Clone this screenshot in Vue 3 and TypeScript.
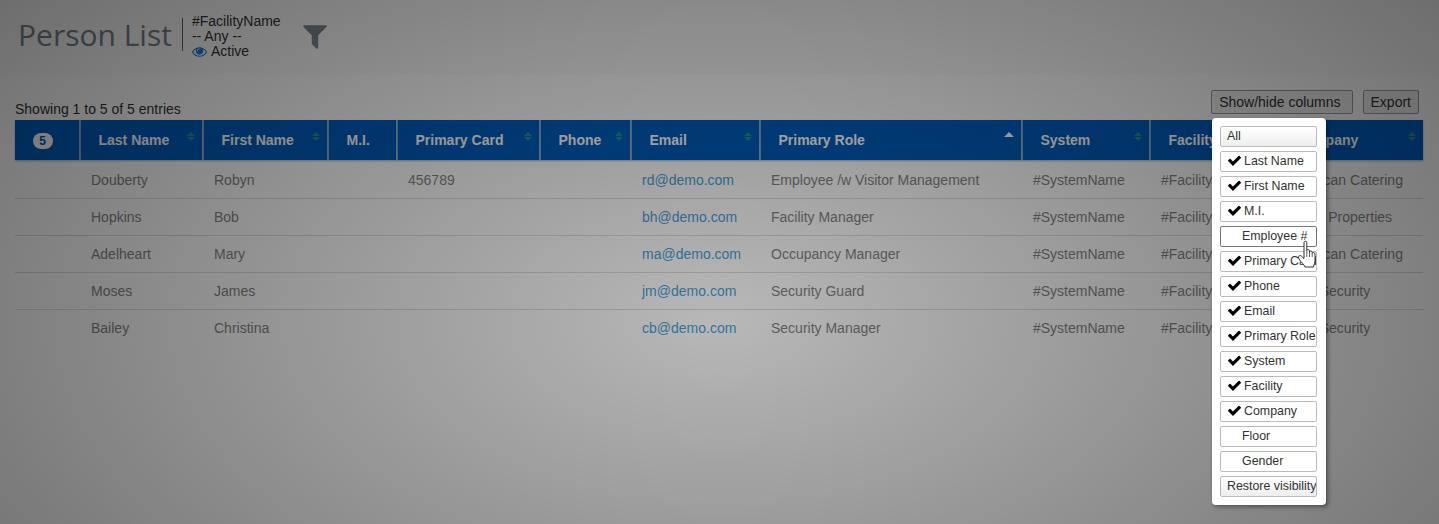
<script setup lang="ts">
interface Col { label: string; width: number; sort: 'both' | 'asc' | 'none' }
const cols: Col[] = [
  { label: '', width: 66, sort: 'none' },
  { label: 'Last Name', width: 123, sort: 'both' },
  { label: 'First Name', width: 125, sort: 'both' },
  { label: 'M.I.', width: 69, sort: 'none' },
  { label: 'Primary Card', width: 143, sort: 'both' },
  { label: 'Phone', width: 91, sort: 'both' },
  { label: 'Email', width: 129, sort: 'both' },
  { label: 'Primary Role', width: 262, sort: 'asc' },
  { label: 'System', width: 128, sort: 'both' },
  { label: 'Facility', width: 126, sort: 'both' },
  { label: 'Company', width: 146, sort: 'both' },
]
const rows = [
  ['Douberty', 'Robyn', '', '456789', '', 'rd@demo.com', 'Employee /w Visitor Management', '#SystemName', '#FacilityName', 'American Catering'],
  ['Hopkins', 'Bob', '', '', '', 'bh@demo.com', 'Facility Manager', '#SystemName', '#FacilityName', 'Demo Properties'],
  ['Adelheart', 'Mary', '', '', '', 'ma@demo.com', 'Occupancy Manager', '#SystemName', '#FacilityName', 'American Catering'],
  ['Moses', 'James', '', '', '', 'jm@demo.com', 'Security Guard', '#SystemName', '#FacilityName', 'ABC Security'],
  ['Bailey', 'Christina', '', '', '', 'cb@demo.com', 'Security Manager', '#SystemName', '#FacilityName', 'ABC Security'],
]
const menu = [
  { label: 'All', kind: 'action' },
  { label: 'Last Name', kind: 'on' },
  { label: 'First Name', kind: 'on' },
  { label: 'M.I.', kind: 'on' },
  { label: 'Employee #', kind: 'hover' },
  { label: 'Primary Card', kind: 'on' },
  { label: 'Phone', kind: 'on' },
  { label: 'Email', kind: 'on' },
  { label: 'Primary Role', kind: 'on' },
  { label: 'System', kind: 'on' },
  { label: 'Facility', kind: 'on' },
  { label: 'Company', kind: 'on' },
  { label: 'Floor', kind: 'off' },
  { label: 'Gender', kind: 'off' },
  { label: 'Restore visibility', kind: 'action' },
]
</script>

<template>
  <div class="page">
    <header class="head">
      <h1 class="title">Person List</h1>
      <div class="meta">
        <div>#FacilityName</div>
        <div>-- Any --</div>
        <div class="active">
          <svg class="eye" viewBox="0 0 1792 1792"><path d="M1664 960q-152-236-381-353 61 104 61 225 0 185-131.500 316.500t-316.500 131.500-316.500-131.500-131.500-316.500q0-121 61-225-229 117-381 353 133 205 333.500 326.500t434.500 121.500 434.500-121.500 333.500-326.500zm-720-384q0-20-14-34t-34-14q-125 0-214.500 89.500t-89.500 214.500q0 20 14 34t34 14 34-14 14-34q0-86 61-147t147-61q20 0 34-14t14-34zm848 384q0 34-20 69-140 230-376.500 368.500t-499.500 138.500-499.500-139-376.500-368q-20-35-20-69t20-69q140-229 376.500-368t499.500-139 499.500 139 376.500 368q20 35 20 69z" /></svg>
          <span>Active</span>
        </div>
      </div>
      <svg class="filter" viewBox="0 0 1792 1792"><path d="M1595 295q17 41-14 70l-493 493v742q0 42-39 59-13 5-25 5-27 0-45-19l-256-256q-19-19-19-45v-486l-493-493q-31-29-14-70 17-39 59-39h1280q42 0 59 39z" /></svg>
    </header>

    <div class="toolbar">
      <div class="info">Showing 1 to 5 of 5 entries</div>
      <div class="buttons">
        <button class="tbtn wide">Show/hide columns</button>
        <button class="tbtn">Export</button>
      </div>
    </div>

    <table class="table">
      <colgroup>
        <col v-for="c in cols" :key="c.label" :style="{ width: c.width + 'px' }" />
      </colgroup>
      <thead>
        <tr>
          <th v-for="(c, i) in cols" :key="c.label">
            <span v-if="i === 0" class="badge">5</span>
            <template v-else>{{ c.label }}</template>
            <span v-if="c.sort === 'both'" class="sort"><i class="up"></i><i class="down"></i></span>
            <span v-if="c.sort === 'asc'" class="sort"><i class="up lit"></i></span>
          </th>
        </tr>
      </thead>
      <tbody>
        <tr v-for="r in rows" :key="r[0]">
          <td></td>
          <td v-for="(v, j) in r" :key="j">
            <a v-if="j === 5" class="link">{{ v }}</a>
            <template v-else>{{ v }}</template>
          </td>
        </tr>
      </tbody>
    </table>

    <div class="overlay"></div>

    <div class="menu">
      <div v-for="m in menu" :key="m.label" class="item" :class="m.kind">
        <svg v-if="m.kind === 'on'" class="check" viewBox="0 0 1792 1792"><path d="M1671 566q0 40-28 68l-724 724-136 136q-28 28-68 28t-68-28l-136-136-362-362q-28-28-28-68t28-68l136-136q28-28 68-28t68 28l294 295 656-657q28-28 68-28t68 28l136 136q28 28 28 68z" /></svg>
        <span class="lbl">{{ m.label }}</span>
      </div>
    </div>

    <svg class="hand" viewBox="0 0 20 28">
      <path d="M7 13V2.500C7 .8 9.800 .8 9.800 2.500V10.500C10 9.200 12.300 9.200 12.500 10.800V11.800C12.800 10.500 15 10.600 15.200 12.300V13.200C15.600 12 17.800 12.200 18 14V20C18 23 17 24 16.500 27H8C7.500 24.500 4 22.500 2 19C.6 16.500 2.500 14.500 4.500 16.200L7 18.500Z" />
      <path class="fine" d="M9.800 10.500V17M12.500 11.500V17M15.200 13V17" />
    </svg>
  </div>
</template>

<style>
html, body { margin: 0; padding: 0; background: #fff; }
</style>

<style scoped>
.page {
  position: relative;
  width: 1439px;
  height: 524px;
  overflow: hidden;
  box-sizing: border-box;
  padding: 0 15px;
  font-family: "Liberation Sans", Arial, sans-serif;
  font-size: 14px;
  color: #333;
  background: #fff;
}
.head {
  display: flex;
  align-items: flex-start;
  height: 75px;
  margin: 0 -15px 11px;
  padding-left: 18px;
  padding-top: 13px;
  box-sizing: border-box;
  background: #fbfbfb;
}
.title {
  margin: 0;
  font-family: "Open Sans", sans-serif;
  font-weight: 400;
  font-size: 30px;
  line-height: 44px;
  color: #76828a;
}
.meta {
  margin-top: 5px;
  margin-left: 10px;
  height: 33px;
  padding-left: 9px;
  border-left: 1px solid #666;
  line-height: 15px;
}
.meta > div { position: relative; top: -4px; }
.active { display: flex; align-items: center; gap: 4px; }
.eye { width: 15px; height: 15px; fill: #1f7fd8; }
.filter {
  width: 30px;
  height: 30px;
  margin-left: 19px;
  margin-top: 8px;
  fill: #7f878e;
}
.toolbar {
  display: flex;
  justify-content: space-between;
  align-items: flex-start;
  height: 34px;
}
.info { padding-top: 15px; line-height: 17px; }
.buttons { display: flex; gap: 10px; padding-right: 5px; margin-top: 4px; }
.tbtn {
  height: 24px;
  padding: 0 7px;
  border: 1px solid #999;
  border-radius: 2px;
  background: #eee;
  font-family: inherit;
  font-size: 14px;
  color: #333;
}
.tbtn.wide { padding-right: 11px; }
.table {
  width: 1408px;
  table-layout: fixed;
  border-collapse: separate;
  border-spacing: 0;
  font-size: 14px;
}
th {
  position: relative;
  height: 40px;
  padding: 0 0 0 17.5px;
  box-sizing: border-box;
  background: #005cbb;
  color: #fff;
  font-weight: 700;
  font-size: 14px;
  text-align: left;
  border-right: 2px solid #8fb3d9;
  box-shadow: 0 1px 2px rgba(0,0,0,.3);
  white-space: nowrap;
}
th:last-child { border-right: 0; }
.badge {
  display: inline-block;
  width: 20px;
  height: 16px;
  border-radius: 8px;
  background: #fff;
  color: #005cbb;
  font-size: 12px;
  line-height: 16px;
  text-align: center;
  vertical-align: middle;
}
.sort {
  position: absolute;
  top: 12px;
  right: 7px;
  display: flex;
  flex-direction: column;
  gap: 1px;
}
.sort i {
  display: block;
  width: 0;
  height: 0;
  border-left: 4px solid transparent;
  border-right: 4px solid transparent;
}
.sort .up { border-bottom: 4px solid #209090; }
.sort .down { border-top: 4px solid #209090; }
.sort .lit { border-bottom-color: #fff; border-left-width: 5px; border-right-width: 5px; border-bottom-width: 5px; }
td {
  height: 37px;
  padding: 0 0 0 10px;
  box-sizing: border-box;
  color: #858585;
  white-space: nowrap;
  overflow: hidden;
  border-bottom: 1px solid #ddd;
}
tbody tr:first-child td { height: 39px; padding-top: 2px; }
tbody tr:last-child td { border-bottom-color: transparent; }
.link { color: #4a9fd8; }
.overlay {
  position: absolute;
  inset: 0;
  background: radial-gradient(ellipse 1100px 620px at 720px 320px, rgba(0,0,0,.28) 0%, rgba(0,0,0,.62) 100%);
}
.menu {
  position: absolute;
  left: 1212px;
  top: 118px;
  width: 114px;
  height: 387px;
  box-sizing: border-box;
  padding: 8px 9px 8px 8px;
  display: flex;
  flex-direction: column;
  gap: 4px;
  background: #fff;
  border-radius: 4px;
  box-shadow: 2px 2px 4px rgba(0,0,0,.4);
}
.item {
  position: relative;
  box-sizing: border-box;
  height: 21px;
  flex: none;
  border: 1px solid #bbb;
  border-radius: 2px;
  background: #fff;
  font-size: 12.4px;
  line-height: 19px;
  color: #333;
  white-space: nowrap;
  overflow: hidden;
}
.item .lbl { position: absolute; left: 23px; top: 0; }
.item.off .lbl, .item.hover .lbl { left: 21px; }
.item.action { background: linear-gradient(#fff, #eee); }
.item.action .lbl { left: 6px; }
.item.hover { border-color: #777; }
.check { position: absolute; left: 6px; top: 1px; width: 15px; height: 15px; fill: #000; }
.hand {
  position: absolute;
  left: 1297px;
  top: 240px;
  width: 20px;
  height: 28px;
  fill: #fff;
  stroke: #333;
  stroke-width: 1;
}
.fine { fill: none; stroke-width: .8; }
</style>
